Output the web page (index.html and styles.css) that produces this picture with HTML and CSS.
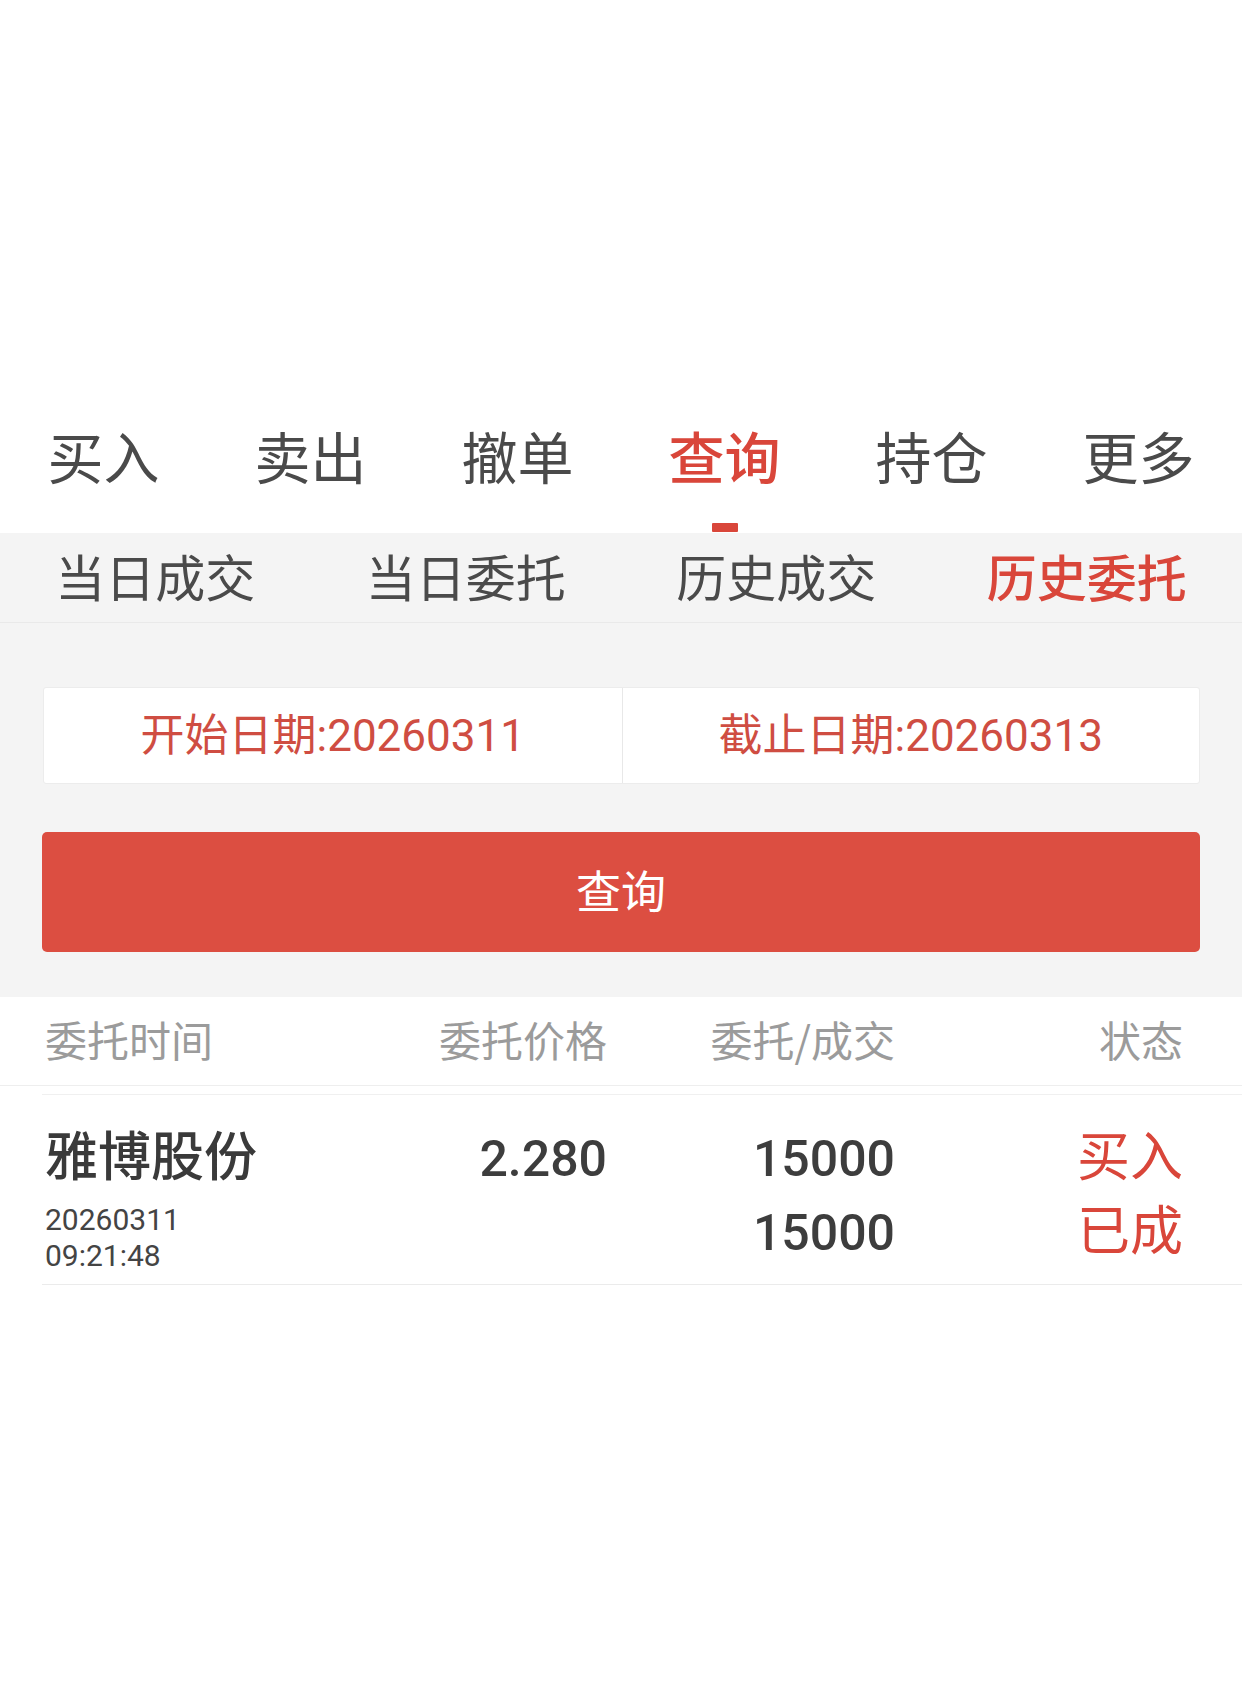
FILE: index.html
```html
<!DOCTYPE html>
<html lang="zh-CN">
<head>
<meta charset="utf-8">
<title>历史委托</title>
<link rel="stylesheet" href="styles.css">
</head>
<body>
<div class="app">
  <div class="top-space"></div>

  <nav class="main-tabs">
    <div class="tab"><span class="tab-label">买入</span></div>
    <div class="tab"><span class="tab-label">卖出</span></div>
    <div class="tab"><span class="tab-label">撤单</span></div>
    <div class="tab active"><span class="tab-label">查询</span><span class="tab-indicator"></span></div>
    <div class="tab"><span class="tab-label">持仓</span></div>
    <div class="tab"><span class="tab-label">更多</span></div>
  </nav>

  <nav class="sub-tabs">
    <div class="sub-tab">当日成交</div>
    <div class="sub-tab">当日委托</div>
    <div class="sub-tab">历史成交</div>
    <div class="sub-tab active">历史委托</div>
  </nav>

  <section class="query-panel">
    <div class="date-box">
      <div class="date-cell">开始日期:20260311</div>
      <div class="date-cell">截止日期:20260313</div>
    </div>
    <button class="query-btn">查询</button>
  </section>

  <div class="table-head">
    <div class="col c1">委托时间</div>
    <div class="col c2">委托价格</div>
    <div class="col c3">委托/成交</div>
    <div class="col c4">状态</div>
  </div>

  <div class="row-wrap">
    <div class="row">
      <div class="col c1">
        <div class="stock-name">雅博股份</div>
        <div class="stock-time">20260311<br>09:21:48</div>
      </div>
      <div class="col c2"><div class="num">2.280</div></div>
      <div class="col c3"><div class="num">15000</div><div class="num">15000</div></div>
      <div class="col c4"><div class="status">买入</div><div class="status">已成</div></div>
    </div>
  </div>
</div>
</body>
</html>
```

FILE: styles.css
```css
html, body {
  margin: 0;
  padding: 0;
  background: #ffffff;
}

body {
  width: 1242px;
  font-family: "Noto Sans CJK SC", "Roboto", sans-serif;
  color: #4a4a4a;
}

.app {
  width: 1242px;
  min-height: 1704px;
  background: #ffffff;
}

.top-space {
  height: 400px;
}

/* main tabs */
.main-tabs {
  display: grid;
  grid-template-columns: repeat(6, 1fr);
  height: 133px;
  box-sizing: border-box;
  padding-top: 27px;
  padding-bottom: 1px;
}

.tab {
  display: flex;
  flex-direction: column;
  align-items: center;
  justify-content: space-between;
}

.tab-label {
  font-size: 56px;
  line-height: 56px;
  color: #4a4a4a;
}

.tab.active .tab-label {
  color: #d9463a;
  font-weight: 500;
}

.tab-indicator {
  width: 26px;
  height: 9px;
  background: #d9463a;
  border-radius: 1px;
}

/* sub tabs */
.sub-tabs {
  display: grid;
  grid-template-columns: repeat(4, 1fr);
  background: #f4f4f4;
  height: 90px;
  box-sizing: border-box;
  padding-top: 17px;
  border-bottom: 1px solid #e9e9e9;
}

.sub-tab {
  text-align: center;
  font-size: 50px;
  line-height: 50px;
  color: #4a4a4a;
}

.sub-tab.active {
  color: #d9463a;
  font-weight: 500;
}

/* query panel */
.query-panel {
  background: #f4f4f4;
  padding: 64px 42px 45px;
  display: flex;
  flex-direction: column;
  gap: 48px;
}

.date-box {
  display: grid;
  grid-template-columns: 1fr 1fr;
  height: 97px;
  box-sizing: border-box;
  background: #ffffff;
  border: 1px solid #ececec;
  border-radius: 3px;
  margin-left: 1px;
}

.date-cell {
  display: flex;
  align-items: center;
  justify-content: center;
  padding-bottom: 8px;
  font-family: "Roboto", "Noto Sans CJK SC", sans-serif;
  font-size: 44px;
  color: #cf4d42;
}

.date-cell + .date-cell {
  border-left: 1px solid #e8e8e8;
}

.query-btn {
  display: block;
  width: 100%;
  height: 120px;
  border: none;
  border-radius: 5px;
  background: #dc4e41;
  color: #ffffff;
  font-family: "Noto Sans CJK SC", sans-serif;
  font-size: 45px;
  padding: 0 0 6px;
}

/* table */
.table-head,
.row {
  display: grid;
  grid-template-columns: 1fr 226px 288px 288px;
  padding-right: 59px;
}

.table-head {
  padding-left: 45px;
  padding-top: 21px;
  padding-bottom: 25px;
  border-bottom: 1px solid #eeeeee;
  font-size: 42px;
  line-height: 42px;
  color: #9b9b9b;
}

.c2, .c3, .c4 {
  text-align: right;
}

.row-wrap {
  margin-top: 8px;
  margin-left: 42px;
  border-top: 1px solid #f0f0f0;
  border-bottom: 1px solid #ebebeb;
}

.row {
  padding-left: 3px;
  padding-top: 21px;
  padding-bottom: 10px;
  align-items: baseline;
}

.stock-name {
  font-size: 53px;
  line-height: 74px;
  font-weight: 500;
  color: #3a3a3a;
}

.stock-time {
  margin-top: 12px;
  font-family: "Roboto", sans-serif;
  font-size: 30px;
  line-height: 36px;
  color: #444444;
}

.num {
  font-family: "Roboto", sans-serif;
  font-size: 50px;
  line-height: 74px;
  font-weight: 500;
  color: #3d3d3d;
}

.status {
  font-size: 53px;
  line-height: 74px;
  color: #d9463a;
}
```
